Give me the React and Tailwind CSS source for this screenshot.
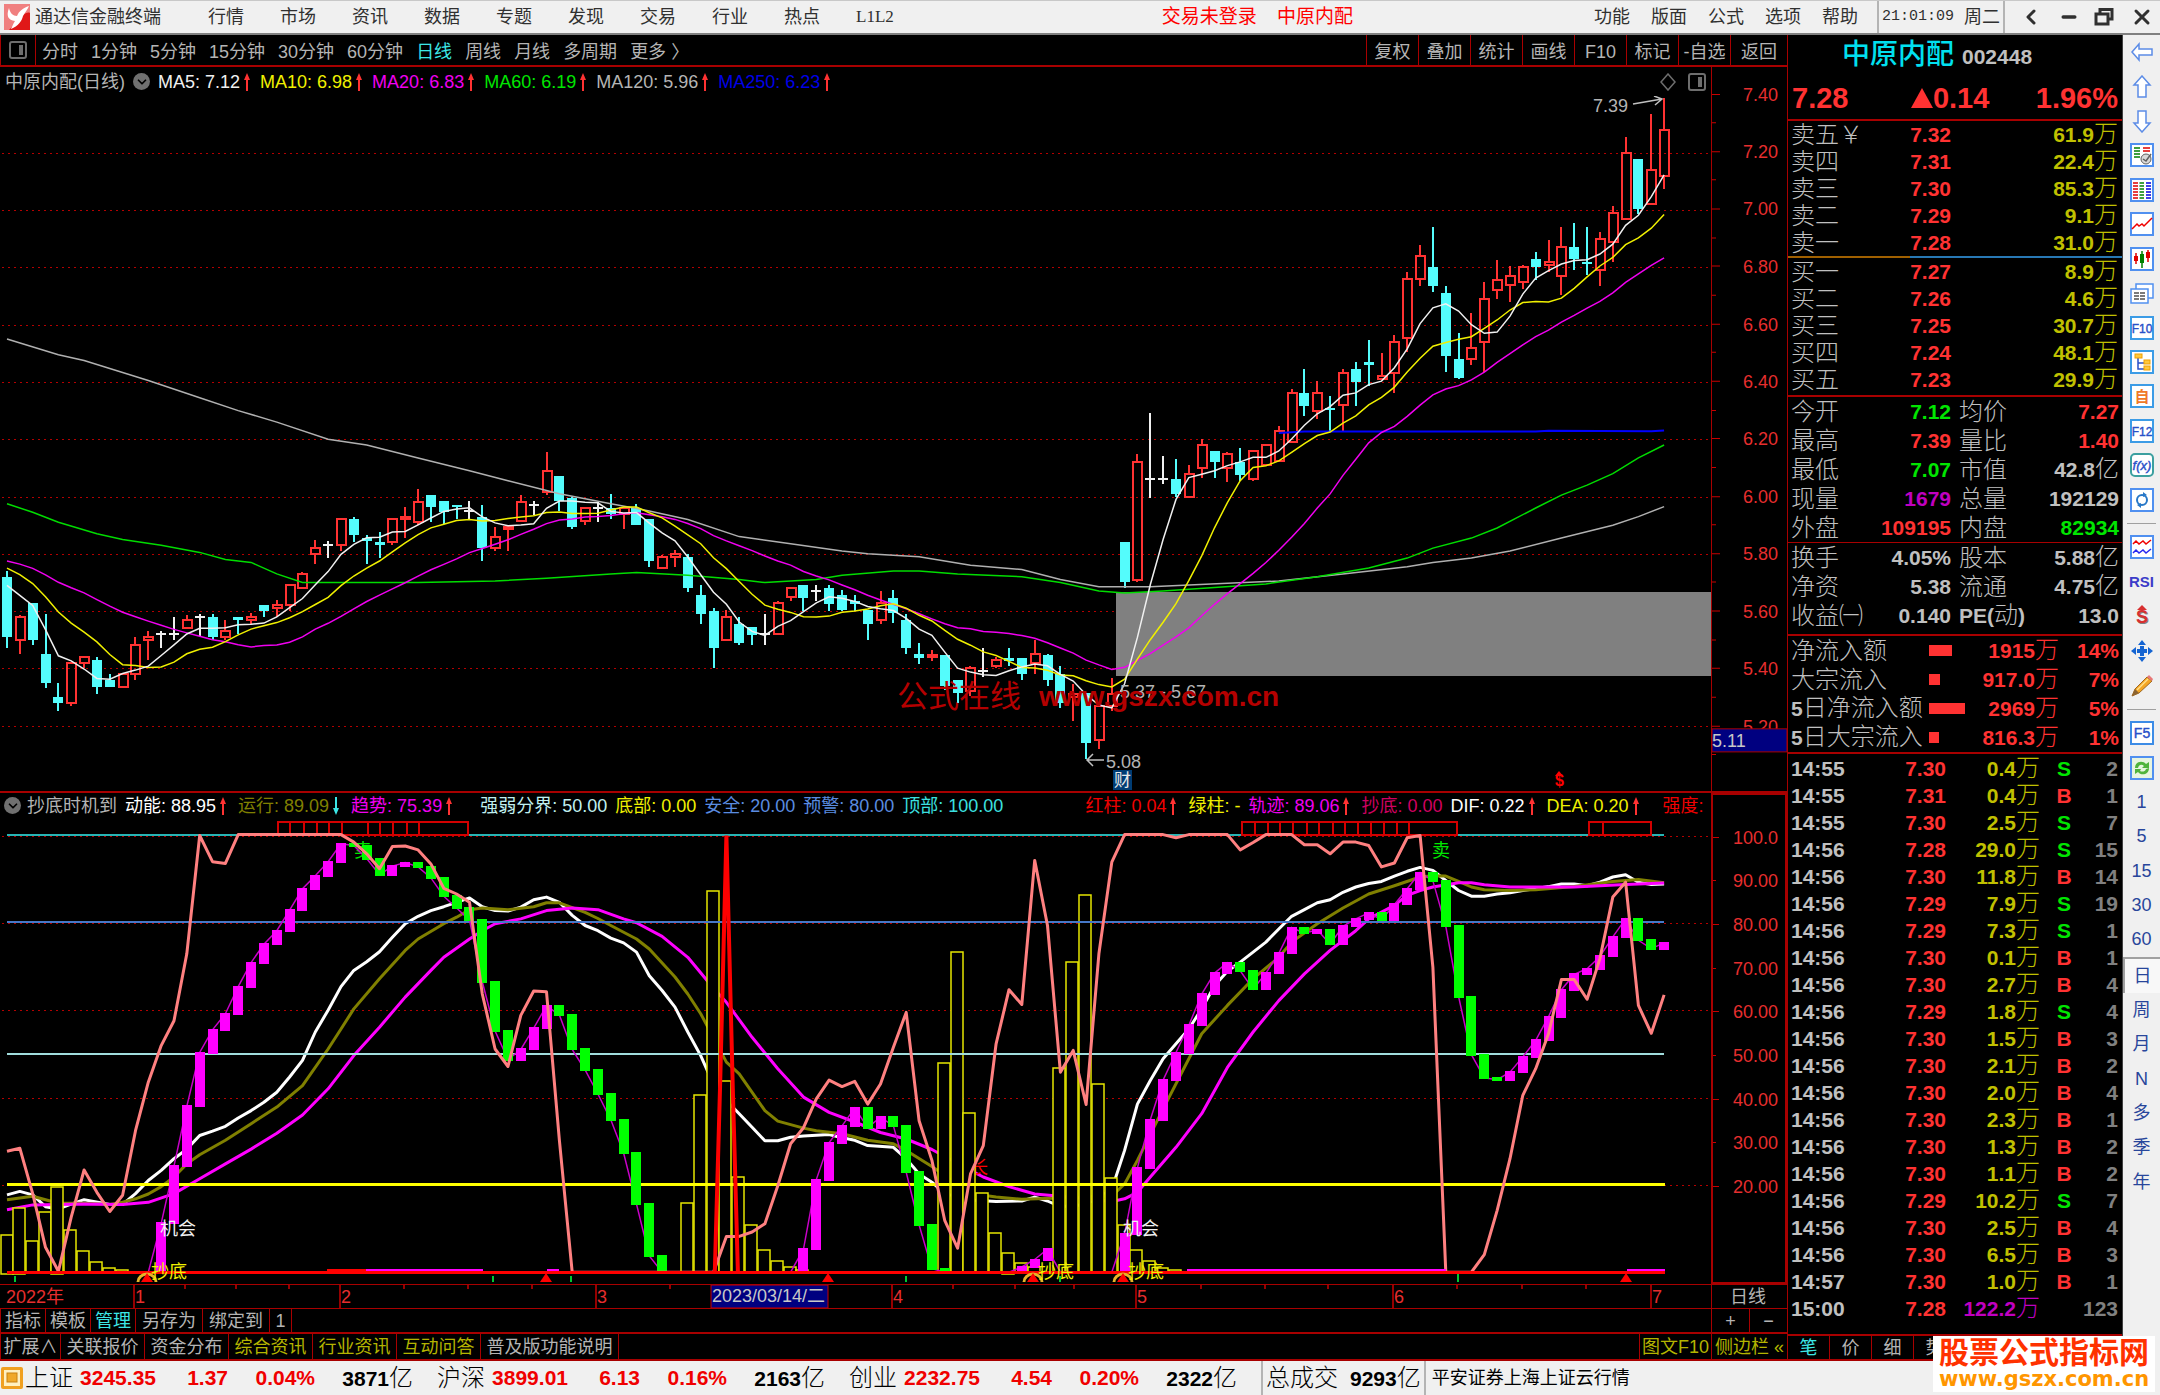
import { ChevronDown, ChevronLeft, Minus, X } from "lucide-react";

const MENU = ["行情", "市场", "资讯", "数据", "专题", "发现", "交易", "行业", "热点"];
const MENU_RIGHT = ["功能", "版面", "公式", "选项", "帮助"];
const PERIODS = ["分时", "1分钟", "5分钟", "15分钟", "30分钟", "60分钟", "日线", "周线", "月线", "多周期", "更多 〉"];
const TOOLS = ["复权", "叠加", "统计", "画线", "F10", "标记", "-自选", "返回"];

const MA_LEGEND = [
  ["MA5: 7.12", "text-[#f0f0f0]"],
  ["MA10: 6.98", "text-[#f0f000]"],
  ["MA20: 6.83", "text-[#f000f0]"],
  ["MA60: 6.19", "text-[#00e600]"],
  ["MA120: 5.96", "text-[#b4b4b4]"],
  ["MA250: 6.23", "text-[#0000e6]"],
];

// text, colour, arrow direction, extra spacing
const SUB_LEGEND = [
  ["动能: 88.95", "text-white", "up", ""],
  ["运行: 89.09", "text-[#808000]", "down", ""],
  ["趋势: 75.39", "text-[#f000f0]", "up", ""],
  ["强弱分界: 50.00", "text-[#c0f0f0]", "", "ml-4"],
  ["底部: 0.00", "text-[#f0f000]", "", ""],
  ["安全: 20.00", "text-[#5a8ce0]", "", ""],
  ["预警: 80.00", "text-[#5a8ce0]", "", ""],
  ["顶部: 100.00", "text-[#3ce0e0]", "", ""],
  ["红柱: 0.04", "text-[#f00000]", "up", "ml-[74px]"],
  ["绿柱: -", "text-[#f0f000]", "", ""],
  ["轨迹: 89.06", "text-[#f000f0]", "up", ""],
  ["抄底: 0.00", "text-[#d00060]", "", ""],
  ["DIF: 0.22", "text-white", "up", ""],
  ["DEA: 0.20", "text-[#f0f000]", "up", ""],
  ["强度:", "text-[#f00000]", "", "ml-3"],
];

// open, close, high, low
const CANDLES = [
  [5.72, 5.51, 5.74, 5.47], [5.5, 5.58, 5.585, 5.45], [5.63, 5.5, 5.63, 5.48], [5.45, 5.35, 5.59, 5.33],
  [5.3, 5.28, 5.35, 5.25], [5.28, 5.42, 5.42, 5.27], [5.42, 5.44, 5.44, 5.4], [5.43, 5.335, 5.44, 5.31],
  [5.36, 5.335, 5.38, 5.335], [5.335, 5.38, 5.38, 5.335], [5.38, 5.48, 5.51, 5.36], [5.5, 5.51, 5.53, 5.43],
  [5.52, 5.52, 5.53, 5.47], [5.52, 5.52, 5.58, 5.5], [5.54, 5.57, 5.585, 5.54], [5.58, 5.58, 5.59, 5.51],
  [5.58, 5.51, 5.59, 5.5], [5.51, 5.53, 5.57, 5.5], [5.58, 5.57, 5.58, 5.52], [5.57, 5.58, 5.595, 5.555],
  [5.62, 5.6, 5.62, 5.58], [5.61, 5.62, 5.64, 5.58], [5.62, 5.69, 5.695, 5.6], [5.68, 5.73, 5.735, 5.68],
  [5.8, 5.82, 5.85, 5.765], [5.83, 5.83, 5.845, 5.785], [5.83, 5.92, 5.92, 5.81], [5.92, 5.865, 5.93, 5.84],
  [5.855, 5.845, 5.865, 5.765], [5.84, 5.83, 5.875, 5.785], [5.84, 5.92, 5.925, 5.83], [5.92, 5.93, 5.965, 5.855],
  [5.91, 5.98, 6.025, 5.9], [6.005, 5.965, 6.005, 5.91], [5.985, 5.945, 5.985, 5.905], [5.972, 5.964, 5.972, 5.92],
  [5.95, 5.95, 5.985, 5.92], [5.93, 5.82, 5.97, 5.775], [5.82, 5.86, 5.895, 5.81], [5.89, 5.895, 5.9, 5.81],
  [5.915, 5.98, 6.005, 5.91], [5.97, 5.97, 5.985, 5.935], [6.015, 6.09, 6.155, 6.005], [6.07, 5.985, 6.07, 5.95],
  [5.995, 5.895, 6, 5.885], [5.915, 5.96, 5.96, 5.9], [5.96, 5.96, 5.98, 5.91], [5.96, 5.94, 6.01, 5.92],
  [5.94, 5.96, 5.96, 5.885], [5.96, 5.9, 5.975, 5.9], [5.92, 5.775, 5.92, 5.755], [5.75, 5.79, 5.795, 5.75],
  [5.79, 5.8, 5.815, 5.755], [5.79, 5.68, 5.8, 5.665], [5.655, 5.59, 5.69, 5.555], [5.6, 5.47, 5.61, 5.4],
  [5.5, 5.58, 5.605, 5.495], [5.555, 5.49, 5.58, 5.48], [5.545, 5.515, 5.545, 5.48], [5.52, 5.52, 5.59, 5.48],
  [5.52, 5.63, 5.635, 5.52], [5.65, 5.68, 5.685, 5.635], [5.69, 5.645, 5.69, 5.6], [5.67, 5.67, 5.69, 5.635],
  [5.68, 5.625, 5.69, 5.6], [5.655, 5.605, 5.675, 5.6], [5.635, 5.625, 5.655, 5.6], [5.605, 5.555, 5.605, 5.5],
  [5.57, 5.63, 5.67, 5.555], [5.645, 5.595, 5.675, 5.56], [5.57, 5.47, 5.59, 5.45], [5.45, 5.435, 5.49, 5.415],
  [5.44, 5.445, 5.465, 5.425], [5.445, 5.34, 5.445, 5.325], [5.36, 5.315, 5.36, 5.28], [5.32, 5.4, 5.41, 5.305],
  [5.39, 5.39, 5.47, 5.37], [5.41, 5.43, 5.44, 5.4], [5.435, 5.425, 5.47, 5.41], [5.435, 5.38, 5.435, 5.36],
  [5.42, 5.45, 5.5, 5.38], [5.445, 5.36, 5.45, 5.34], [5.38, 5.28, 5.41, 5.26], [5.3, 5.31, 5.345, 5.215],
  [5.315, 5.14, 5.315, 5.085], [5.15, 5.27, 5.28, 5.12], [5.27, 5.31, 5.365, 5.25], [5.84, 5.7, 5.84, 5.68],
  [5.71, 6.12, 6.15, 5.7], [6.06, 6.06, 6.29, 5.995], [6.06, 6.06, 6.14, 6.045], [6.06, 6.01, 6.13, 6],
  [6, 6.08, 6.11, 6], [6.1, 6.18, 6.2, 6.065], [6.16, 6.12, 6.16, 6.065], [6.1, 6.15, 6.155, 6.05],
  [6.12, 6.075, 6.17, 6.055], [6.06, 6.16, 6.16, 6.055], [6.11, 6.18, 6.18, 6.11], [6.125, 6.23, 6.245, 6.125],
  [6.19, 6.36, 6.375, 6.19], [6.36, 6.315, 6.445, 6.28], [6.3, 6.36, 6.405, 6.27], [6.31, 6.305, 6.35, 6.23],
  [6.32, 6.43, 6.445, 6.23], [6.445, 6.4, 6.47, 6.315], [6.47, 6.46, 6.545, 6.385], [6.41, 6.42, 6.5, 6.41],
  [6.43, 6.54, 6.565, 6.36], [6.555, 6.76, 6.785, 6.505], [6.76, 6.84, 6.88, 6.735], [6.8, 6.735, 6.94, 6.715],
  [6.71, 6.49, 6.735, 6.435], [6.48, 6.415, 6.57, 6.41], [6.48, 6.52, 6.64, 6.46], [6.54, 6.69, 6.75, 6.435],
  [6.72, 6.755, 6.825, 6.69], [6.74, 6.77, 6.805, 6.68], [6.75, 6.8, 6.81, 6.725], [6.83, 6.8, 6.855, 6.755],
  [6.81, 6.82, 6.895, 6.785], [6.77, 6.87, 6.94, 6.705], [6.87, 6.83, 6.955, 6.79], [6.82, 6.815, 6.94, 6.775],
  [6.79, 6.9, 6.925, 6.735], [6.89, 6.99, 7.015, 6.82], [6.97, 7.2, 7.255, 6.965], [7.18, 7.005, 7.18, 6.985],
  [7.02, 7.14, 7.335, 7.02], [7.12, 7.28, 7.39, 7.075],
];

// closes of the 19 sessions before the first candle
const PRIOR = [...Array(10).fill(5.8), ...Array(5).fill(5.81), 5.755, 5.675, 5.775, 5.735];
const CLOSES = [...PRIOR, ...CANDLES.map((c) => c[1])];

// [session, value] pairs
const MA60 = [[0, 5.975], [2, 5.945], [4, 5.91], [7, 5.87], [9, 5.85], [12, 5.83], [15, 5.805], [17, 5.78], [19, 5.77], [21, 5.73], [23, 5.7], [32, 5.7], [38, 5.705], [42, 5.715], [47, 5.73], [49, 5.735], [53, 5.725], [57, 5.71], [59, 5.7], [63, 5.71], [65, 5.725], [69, 5.74], [71, 5.74], [74, 5.73], [79, 5.72], [82, 5.7], [85, 5.67], [87, 5.663], [90, 5.67], [98, 5.695], [102, 5.72], [106, 5.75], [109, 5.785], [111, 5.82], [114, 5.855], [116, 5.89], [119, 5.96], [121, 6.005], [123, 6.04], [125, 6.08], [127, 6.135], [129, 6.18]];
const MA120 = [[0, 6.55], [4, 6.495], [6, 6.475], [11, 6.405], [15, 6.345], [18, 6.3], [21, 6.26], [25, 6.2], [28, 6.18], [32, 6.135], [36, 6.09], [39, 6.055], [43, 6.01], [47, 5.975], [50, 5.95], [53, 5.92], [57, 5.86], [61, 5.835], [65, 5.81], [67, 5.8], [71, 5.79], [75, 5.76], [79, 5.745], [82, 5.71], [85, 5.685], [89, 5.685], [99, 5.705], [104, 5.73], [109, 5.755], [111, 5.77], [114, 5.785], [117, 5.81], [121, 5.855], [125, 5.9], [127, 5.93], [129, 5.965]];
const MA250 = [[99, 6.222], [101, 6.227], [119, 6.227], [120, 6.23], [128, 6.228], [129, 6.231]];

const TREND = [
  ...Array(12).fill(0), 11.2, 24.3, 38, 50.3, 55.5, 59.2, 65.4, 70.9, 75.1, 78.2, 82.9, 87.8, 90.8, 94, 98.1, 97.7, 94.7, 91, 93, 93.8, 92.8, 90.3,
  86.1, 83.4, 80.6, 66.5, 55.2, 48.7, 51, 55.9, 61, 58.9, 51, 46.3, 40.8, 34.9, 27.3, 15.6, 3.7, 0, 0, 0, 0, 0, 0, 0, 0, 0, 0, 0,
  5.3, 21.2, 29.7, 33.5, 37.6, 33.1, 35.5, 33.5, 22.9, 10.8, 0.8, 0, 0, 0, 0, 0, 0, 1.2, 2.9, 5.3, 0, 0, 0, 0, 0, 8.8,
  23.9, 34.9, 44, 50.3, 56.5, 63.7, 68.5, 70.9, 69, 64.8, 68.5, 73, 78.9, 77.6, 78.4, 75.1, 79.2, 80.9, 82.3, 80.7, 84.2, 87.8, 91.5, 89.6,
  79.2, 63.1, 49.8, 44.5, 44.1, 45.8, 49.3, 53.1, 58.5, 64.7, 68.2, 69.5, 72.3, 76.8, 80.9, 76, 74.1, 75.4,
];
const MOMENTUM = [[0, 17.7], [1, 18.5], [2, 17.7], [3, 15], [4, 14.5], [5, 15.6], [6, 16.6], [8, 15.5], [9, 15.5], [10, 18], [11, 21], [12, 23.3], [13, 26], [14, 28.2], [15, 31.3], [16, 32.3], [17, 33.4], [18, 35.3], [19, 37], [20, 38.9], [21, 41.2], [22, 44.7], [23, 48.5], [24, 55], [25, 60], [26, 65.4], [27, 69.1], [28, 71.1], [29, 73.4], [30, 76.7], [31, 79.8], [32, 81.5], [33, 82.8], [34, 83.7], [35, 84.7], [36, 85.7], [37, 83.7], [38, 82.8], [39, 82.7], [40, 83.6], [41, 85.3], [42, 85.9], [43, 84.7], [44, 81.7], [45, 79.4], [46, 78.2], [47, 76.5], [48, 75.4], [49, 73.3], [50, 67.9], [51, 64.5], [52, 60.7], [53, 55], [54, 49.6], [55, 43], [56, 39.3], [57, 36.3], [58, 33.2], [59, 30.1], [60, 30.1], [61, 30.9], [62, 31.2], [64, 31.5], [65, 30.8], [66, 30.2], [67, 29], [69, 28.6], [70, 26], [71, 22.5], [72, 20.6], [73, 18], [75, 16.5], [77, 16.2], [79, 16.3], [80, 17.2], [81, 16.3], [82, 15], [84, 15.5], [86, 19], [87, 27.9], [88, 38.5], [89, 43.9], [90, 48.9], [91, 52.3], [92, 55.7], [93, 60.3], [94, 65.6], [95, 68.9], [96, 71], [97, 73.3], [98, 75.6], [99, 78.6], [100, 81.5], [101, 83], [102, 84.6], [103, 85.3], [104, 87], [105, 88.2], [106, 89], [107, 89.5], [108, 90.7], [109, 91.8], [110, 92.7], [111, 92], [112, 89.7], [113, 87.4], [114, 86.1], [115, 86.1], [116, 86.6], [117, 86.9], [118, 87.4], [119, 87.8], [120, 88.3], [121, 88.9], [122, 88.9], [123, 88.5], [124, 89.3], [125, 90.5], [126, 91], [127, 89.3], [128, 88.8], [129, 88.9]];
const RUNNING = [[0, 16.6], [2, 17.4], [4, 15.8], [6, 15.8], [8, 15.5], [9, 16], [10, 16.8], [11, 17.9], [12, 19.6], [13, 21.8], [14, 24.8], [15, 26.9], [17, 30.2], [19, 34], [21, 37.8], [23, 42.7], [25, 51.1], [26, 55.7], [27, 60.3], [29, 67.2], [31, 73.7], [32, 76.3], [34, 79.8], [35, 81.3], [36, 83], [37, 83.4], [39, 83], [41, 83.7], [42, 84.6], [43, 84.6], [45, 82.4], [46, 81], [47, 79.4], [49, 76.3], [50, 74], [52, 67.6], [53, 63.7], [54, 59.2], [56, 48.1], [57, 45.4], [59, 37], [60, 34.6], [62, 33], [63, 32.4], [65, 31.7], [67, 30.2], [69, 29.4], [70, 27.9], [72, 24.2], [75, 18], [77, 17.2], [79, 16.7], [82, 17], [86, 17.5], [87, 20.2], [88, 25.6], [90, 37.4], [93, 54.6], [95, 61.1], [97, 67.2], [99, 72.1], [100, 75.6], [102, 79.8], [104, 83.4], [106, 86.6], [108, 88.5], [110, 90.5], [111, 90.8], [112, 90.7], [113, 89.5], [114, 88.2], [115, 87.6], [117, 87.4], [119, 87.6], [122, 88.3], [125, 89.5], [127, 89.9], [129, 89.2]];
const TRACK = [[0, 14.3], [2, 15.4], [6, 15.6], [9, 15.5], [11, 16], [13, 18], [15, 21.4], [17, 24.8], [19, 28.2], [21, 31.8], [23, 36], [25, 42], [27, 49.6], [29, 56.1], [31, 63], [33, 69.1], [34, 72.1], [36, 76.3], [37, 78.2], [38, 79.8], [40, 80.9], [42, 82.8], [44, 83.4], [46, 83], [48, 80.9], [49, 80], [51, 76.9], [53, 72.1], [55, 65], [56, 61.8], [58, 53.8], [60, 46.6], [62, 40.1], [64, 36.6], [66, 34.4], [68, 32], [70, 30.5], [72, 28.1], [75, 23.3], [76, 21.8], [78, 19.6], [80, 17.9], [82, 17.4], [86, 16.2], [87, 16.8], [88, 18.3], [89, 21.8], [91, 28.6], [93, 36.3], [95, 46.9], [97, 55], [99, 62.2], [101, 68.3], [103, 73.7], [105, 78.2], [106, 80.9], [108, 84], [109, 86.3], [110, 87.4], [111, 88.2], [113, 89.2], [114, 89.2], [115, 88.7], [117, 88.2], [122, 88.2], [126, 88.8], [129, 89.1]];
const STRENGTH = [[0, 27.7], [1, 28.4], [2, 18], [3, 5.7], [4, 0.2], [5, 12.6], [6, 23.4], [7, 18.3], [8, 13.9], [9, 17.6], [10, 32.4], [11, 43.5], [12, 51.9], [13, 57.6], [14, 72.9], [15, 100], [16, 94], [17, 93.6], [18, 100.2], [26, 100.2], [27, 98.5], [28, 95.8], [29, 92.4], [30, 97.5], [31, 97.6], [32, 96.7], [33, 93.5], [34, 87.9], [35, 86.6], [36, 84.7], [37, 63.7], [38, 51.1], [39, 47.1], [40, 58.8], [41, 64.4], [42, 64.2], [43, 30.2], [44, 0], [55, 0], [56, 8.2], [57, 8.2], [58, 9.2], [59, 11.1], [60, 19.8], [61, 29.4], [62, 33.1], [63, 39.7], [64, 44], [65, 42.5], [66, 43.7], [67, 38.5], [68, 43.1], [69, 51.5], [70, 59.5], [71, 34.7], [72, 25.6], [73, 11.8], [74, 5.5], [75, 22.5], [76, 29], [77, 52.3], [78, 64.7], [79, 61.3], [80, 94.3], [81, 79.4], [82, 45.8], [83, 50.8], [84, 38.4], [85, 72.9], [86, 93.9], [87, 100.2], [90, 100.2], [91, 99.5], [92, 100.2], [95, 100.2], [96, 96.7], [97, 98.4], [98, 100.2], [100, 100.2], [101, 97.9], [102, 97.9], [103, 95.8], [104, 98.5], [105, 98.5], [106, 97.7], [107, 92.8], [108, 93.7], [109, 99.5], [110, 100], [111, 69.8], [112, 0], [114, 0], [115, 4], [116, 14.1], [117, 26], [118, 40.5], [119, 46.6], [120, 54.6], [121, 67], [122, 67], [123, 62.5], [124, 71.8], [125, 85.9], [126, 89.3], [127, 61.1], [128, 54.7], [129, 63.5]];
const BARS = [[0, 8.6], [1, 14.8], [2, 7.2], [3, 13.7], [4, 19.6], [5, 9.7], [6, 4.9], [7, 2.4], [8, 1], [9, 0.4], [53, 15.9], [54, 40.6], [55, 87.3], [56, 43.7], [57, 21.8], [58, 10.7], [59, 5.1], [60, 2.5], [61, 1.1], [62, 0.5], [73, 47.9], [74, 73.3], [75, 36.5], [76, 18.2], [77, 9], [78, 4.5], [79, 2.1], [80, 1.1], [82, 46.8], [83, 71.1], [84, 86.3], [85, 43.1], [86, 21.5], [87, 10.7], [88, 5.1], [89, 2.5], [90, 1], [91, 0.4]];

const PRICE_LABELS = [7.4, 7.2, 7, 6.8, 6.6, 6.4, 6.2, 6, 5.8, 5.6, 5.4, 5.2];
const SUB_LABELS = [["100.0", 100], ["90.00", 90], ["80.00", 80], ["70.00", 70], ["60.00", 60], ["50.00", 50], ["40.00", 40], ["30.00", 30], ["20.00", 20]];
const MONTHS = [["1", 134], ["2", 340], ["3", 596], ["4", 892], ["5", 1136], ["6", 1393], ["7", 1651]];
const WEEKS = [185, 236, 289, 404, 468, 532, 670, 953, 1015, 1074, 1201, 1265, 1328, 1457, 1522, 1586];
const ZONES = [
  [278, 468, [290, 304, 317, 329, 342, 368, 380, 393, 407, 419]],
  [1242, 1457, [1255, 1268, 1280, 1293, 1307, 1319, 1333, 1345, 1358, 1371, 1384, 1397, 1409]],
  [1589, 1651, [1603]],
];

const SELLS = [["卖五￥", "7.32", "61.9"], ["卖四", "7.31", "22.4"], ["卖三", "7.30", "85.3"], ["卖二", "7.29", "9.1"], ["卖一", "7.28", "31.0"]];
const BUYS = [["买一", "7.27", "8.9"], ["买二", "7.26", "4.6"], ["买三", "7.25", "30.7"], ["买四", "7.24", "48.1"], ["买五", "7.23", "29.9"]];

const R = "text-[#ff3232]";
const G = "text-[#00e600]";
const W = "text-[#c0c0c0]";
const STATS = [
  ["今开", "7.12", G, "均价", "7.27", R],
  ["最高", "7.39", R, "量比", "1.40", R],
  ["最低", "7.07", G, "市值", "42.8亿", W],
  ["现量", "1679", "text-[#c000c0]", "总量", "192129", W],
  ["外盘", "109195", R, "内盘", "82934", G],
];
const FUNDAMENTALS = [
  ["换手", "4.05%", W, "股本", "5.88亿", W],
  ["净资", "5.38", W, "流通", "4.75亿", W],
  ["收益㈠", "0.140", W, "PE(动)", "13.0", W],
];
const FLOWS = [["净流入额", "1915", "14%"], ["大宗流入", "917.0", "7%"], ["5日净流入额", "2969", "5%"], ["5日大宗流入", "816.3", "1%"]];
const TICKS = [
  ["14:55", "7.30", "0.4", "S", 2], ["14:55", "7.31", "0.4", "B", 1], ["14:55", "7.30", "2.5", "S", 7],
  ["14:56", "7.28", "29.0", "S", 15], ["14:56", "7.30", "11.8", "B", 14], ["14:56", "7.29", "7.9", "S", 19],
  ["14:56", "7.29", "7.3", "S", 1], ["14:56", "7.30", "0.1", "B", 1], ["14:56", "7.30", "2.7", "B", 4],
  ["14:56", "7.29", "1.8", "S", 4], ["14:56", "7.30", "1.5", "B", 3], ["14:56", "7.30", "2.1", "B", 2],
  ["14:56", "7.30", "2.0", "B", 4], ["14:56", "7.30", "2.3", "B", 1], ["14:56", "7.30", "1.3", "B", 2],
  ["14:56", "7.30", "1.1", "B", 2], ["14:56", "7.29", "10.2", "S", 7], ["14:56", "7.30", "2.5", "B", 4],
  ["14:56", "7.30", "6.5", "B", 3], ["14:57", "7.30", "1.0", "B", 1], ["15:00", "7.28", "122.2", "", 123],
];
const INDEXES = [
  ["上证", "3245.35", "1.37", "0.04%", "3871"],
  ["沪深", "3899.01", "6.13", "0.16%", "2163"],
  ["创业", "2232.75", "4.54", "0.20%", "2322"],
];

const sx = (i) => 7 + i * 12.846;
const py = (p) => 324.7 + (6.6 - p) * 286.4;
const vy = (v) => 1272.2 - v * 4.367;
const line = (pts, fy) => pts.map(([i, v]) => `${sx(i).toFixed(1)},${fy(v).toFixed(1)}`).join(" ");
const average = (n) =>
  CANDLES.map((_, i) => {
    const end = i + PRIOR.length + 1;
    return [i, CLOSES.slice(end - n, end).reduce((a, b) => a + b, 0) / n];
  });

function Arrow({ down }) {
  return (
    <svg viewBox="0 0 14 20" className={`h-5 w-[14px] shrink-0 ${down ? "rotate-180 text-[#3ce6e6]" : "text-[#ff3232]"}`}>
      <path d="M7 1 L10 8 H8 V19 H6 V8 H4 Z" fill="currentColor" />
    </svg>
  );
}

function Fold({ label }) {
  return (
    <button aria-label={label} className="flex h-[17px] w-[17px] shrink-0 items-center justify-center rounded-full bg-[#707070] text-black">
      <ChevronDown className="h-3.5 w-3.5" strokeWidth={3} />
    </button>
  );
}

function PanelIcon() {
  return (
    <svg viewBox="0 0 20 18" className="h-[18px] w-5">
      <rect x="2" y="1" width="16" height="16" rx="2" fill="none" stroke="#6e6e6e" strokeWidth="2" />
      <rect x="11" y="4" width="4" height="10" fill="#6e6e6e" />
    </svg>
  );
}

function TitleBar() {
  return (
    <header className="flex h-[35px] items-center border-t border-b-2 border-t-[#c8c8c8] border-b-[#808080] bg-[#f0f0f0] text-lg leading-6 text-[#303030]">
      <svg viewBox="0 0 26 26" className="ml-1 h-[26px] w-[26px] shrink-0">
        <rect width="26" height="26" fill="#e01818" />
        <path d="M0 0 H26 V9 C20 6 12 20 5 26 H0 Z" fill="#f08080" />
        <path d="M5 4 C2 12 4 16 11 17 C9 20 8 23 7 25 C14 22 18 17 19 12 C21 8 24 5 25 2 C19 4 15 7 13 12 C9 12 6 9 5 4 Z" fill="#fff" />
      </svg>
      <h1 className="ml-[5px]">通达信金融终端</h1>
      <nav className="ml-[47px] flex items-center gap-9">
        {MENU.map((m) => (
          <button key={m}>{m}</button>
        ))}
        <button className="font-['Liberation_Serif',serif] text-[17px]">L1L2</button>
      </nav>
      <div className="flex flex-1 justify-center gap-5 pl-[54px] text-[19px] text-[#ff0000]">
        <button>交易未登录</button>
        <button>中原内配</button>
      </div>
      <nav className="ml-[27px] flex gap-[21px]">
        {MENU_RIGHT.map((m) => (
          <button key={m}>{m}</button>
        ))}
      </nav>
      <div className="ml-[19px] flex h-full items-center gap-2.5 border-x-2 border-[#b4b4b4] px-[3px]">
        <time className="font-['Liberation_Mono',monospace] text-[15px]">21:01:09</time>
        <span>周二</span>
      </div>
      <div className="flex w-[155px] items-center justify-between pr-1.5 pl-3.5 text-[#303030]">
        <button aria-label="后退"><ChevronLeft className="h-6 w-6" strokeWidth={3} /></button>
        <button aria-label="最小化"><Minus className="h-5 w-5" strokeWidth={4} /></button>
        <button aria-label="还原">
          <svg viewBox="0 0 20 20" className="h-5 w-5" fill="none" stroke="currentColor" strokeWidth="3">
            <path d="M6 6 V2.500 H18 V12 H14" />
            <rect x="2" y="7" width="12" height="10" />
          </svg>
        </button>
        <button aria-label="关闭"><X className="h-6 w-6" strokeWidth={3} /></button>
      </div>
    </header>
  );
}

function Toolbar() {
  return (
    <div className="flex h-8 items-stretch border-b-2 border-[#a80000] text-lg leading-6 text-[#b4b4b4]">
      <button aria-label="侧栏" className="flex w-[36px] items-center justify-center border-x border-[#a80000]">
        <PanelIcon />
      </button>
      <div className="flex flex-1 items-center gap-[13px] pt-1 pl-1.5">
        {PERIODS.map((p) => (
          <button key={p} className={p === "日线" ? "text-[#3ce6e6]" : ""}>{p}</button>
        ))}
      </div>
      {TOOLS.map((t) => (
        <button key={t} className="w-[52px] border-l border-[#a80000] pt-1 text-center whitespace-nowrap last:w-[57px]">{t}</button>
      ))}
    </div>
  );
}

function Candle({ i, d: [open, close, high, low] }) {
  const x = Math.round(sx(i));
  const top = Math.round(py(Math.max(open, close)));
  const h = Math.max(Math.round(py(Math.min(open, close))) - top, 2);
  const yHigh = Math.round(py(high));
  const yLow = Math.round(py(low));
  if (open === close) {
    return (
      <g fill="#f0f0f0">
        <rect x={x - 1} y={yHigh} width="2" height={yLow - yHigh} />
        <rect x={x - 5} y={top - 1} width="10" height="2" />
      </g>
    );
  }
  if (close < open) {
    return (
      <g fill="#54fcfc">
        <rect x={x - 1} y={yHigh} width="2" height={yLow - yHigh} />
        <rect x={x - 5} y={top} width="10" height={h} />
      </g>
    );
  }
  return (
    <g fill="#ff3232">
      <rect x={x - 1} y={yHigh} width="2" height={Math.max(top - yHigh, 0)} />
      <rect x={x - 1} y={top + h} width="2" height={Math.max(yLow - top - h, 0)} />
      <rect x={x - 4} y={top} width="9" height={h} fill="none" stroke="#ff3232" strokeWidth="1.500" />
    </g>
  );
}

function PriceChart() {
  return (
    <svg viewBox="0 96 1711 695" preserveAspectRatio="none" className="block h-[695px] w-full" role="img" aria-label="日K线">
      <g shapeRendering="crispEdges">
        {PRICE_LABELS.slice(1).map((p) => (
          <line key={p} x1="2" x2="1711" y1={Math.round(py(p)) + 0.5} y2={Math.round(py(p)) + 0.5} stroke="#b40000" strokeDasharray="2 4" />
        ))}
        <rect x="1116" y="592" width="595" height="84" fill="#808080" />
        {CANDLES.map((d, i) => (
          <Candle key={i} i={i} d={d} />
        ))}
      </g>
      <g fill="none" strokeWidth="1.500">
        <polyline points={line(MA120, py)} stroke="#b0b0b0" />
        <polyline points={line(MA250, py)} stroke="#0000ff" strokeWidth="2" />
        <polyline points={line(MA60, py)} stroke="#00dc00" />
        <polyline points={line(average(20), py)} stroke="#f000f0" />
        <polyline points={line(average(10), py)} stroke="#f0f000" />
        <polyline points={line(average(5), py)} stroke="#f0f0f0" />
      </g>
      <g fill="#b4b4b4" fontSize="18">
        <text x="1593" y="112">7.39</text>
        <text x="1106" y="768">5.08</text>
        <text x="1120" y="698">5.37 - 5.67</text>
      </g>
      <g fill="none" stroke="#c0c0c0" strokeWidth="1.500">
        <path d="M1633 104 L1662 99 M1654 96 L1662 99 L1655 105" />
        <path d="M1104 760 H1087 M1093 754 L1087 760 L1093 766" />
      </g>
      <rect x="1113" y="770" width="19" height="20" fill="#003c74" />
      <text x="1114" y="786" fontSize="17" fill="#e8e8e8">财</text>
      <text x="1555" y="786" fontSize="16" fontWeight="700" fill="#ff0000">$</text>
      <path d="M1555 776 L1559 771 L1563 776 Z" fill="#ff0000" />
      <text x="897" y="707" fontSize="31" fill="#b40000">公式在线</text>
      <text x="1039" y="706" fontSize="28" fontWeight="700" fill="#b40000">www.gszx.com.cn</text>
    </svg>
  );
}

function PriceAxis() {
  return (
    <svg viewBox="1712 69 75 722" preserveAspectRatio="none" className="block h-full w-full" role="img" aria-label="价格坐标">
      {PRICE_LABELS.map((p) => (
        <g key={p}>
          <path d={`M1712 ${Math.round(py(p)) + 0.5} h8 M1712 ${Math.round(py(p - 0.1)) + 0.5} h4`} stroke="#c80000" />
          <text x="1743" y={Math.round(py(p)) + 7} fontSize="18" fill="#e62e2e">{p.toFixed(2)}</text>
        </g>
      ))}
      <rect x="1712" y="729" width="75" height="23" fill="#000080" stroke="#a80000" />
      <text x="1712" y="747" fontSize="18" fill="#c8c8c8">5.11</text>
    </svg>
  );
}

function IndicatorChart() {
  return (
    <svg viewBox="0 818 1711 464" preserveAspectRatio="none" className="block h-[464px] w-full" role="img" aria-label="抄底时机到">
      <g shapeRendering="crispEdges">
        {[100, 80, 60, 40, 20].map((v) => (
          <line key={v} x1="2" x2="1711" y1={Math.round(vy(v)) + 0.5} y2={Math.round(vy(v)) + 0.5} stroke="#b40000" strokeDasharray="2 4" />
        ))}
      </g>
      <g fill="none" strokeWidth="3" strokeLinejoin="round">
        <polyline points={line(MOMENTUM, vy)} stroke="#ffffff" />
        <polyline points={line(RUNNING, vy)} stroke="#808000" />
        <polyline points={line(TRACK, vy)} stroke="#ff00ff" />
      </g>
      <text x="970" y="1174" fontSize="18" fill="#ff0000">长</text>
      <g fill="#000" stroke="#e6e600" strokeWidth="1.500">
        {BARS.map(([i, v]) => (
          <rect key={i} x={Math.max(Math.round(sx(i)) - 7, 1)} y={Math.round(vy(v))} width="12" height={Math.round(v * 4.367) + 1} />
        ))}
      </g>
      <g shapeRendering="crispEdges">
        <rect x="7" y="834" width="1657" height="2" fill="#28b4b4" />
        <rect x="7" y="921" width="1657" height="2" fill="#4678c8" />
        <rect x="7" y="1053" width="1657" height="2" fill="#a0dcdc" />
        <rect x="7" y="1183" width="1658" height="3" fill="#ffff00" />
      </g>
      <g fill="none" stroke="#d20000" strokeWidth="2">
        {ZONES.map(([x1, x2, marks]) => (
          <path key={x1} d={`M${x1} 822 H${x2} V835 H${x1} Z ${marks.map((m) => `M${m} 822 V835`).join(" ")}`} />
        ))}
      </g>
      <text x="354" y="857" fontSize="18" fill="#00e600">卖</text>
      <text x="1432" y="857" fontSize="18" fill="#00e600">卖</text>
      <polyline points={line(TREND.map((v, i) => [i, v]), vy)} fill="none" stroke="#c800c8" strokeWidth="1.500" />
      <g shapeRendering="crispEdges">
        {TREND.map((v, i) => {
          const prev = TREND[i - 1] ?? 0;
          if (v === prev || (i > 81 && i < 87)) return null;
          const top = Math.round(vy(Math.max(v, prev)));
          const bottom = Math.round(vy(Math.min(v, prev)));
          return <rect key={i} x={Math.round(sx(i)) - 5} y={top - 1} width="10" height={Math.max(bottom - top + 2, 4)} fill={v > prev ? "#ff00ff" : "#00ff00"} />;
        })}
      </g>
      <polyline points={line(STRENGTH, vy)} fill="none" stroke="#ff8080" strokeWidth="3" strokeLinejoin="round" />
      <polyline points={line([[55.1, 0], [55.5, 42], [56, 100], [56.5, 42], [56.9, 0]], vy)} fill="none" stroke="#ff0000" strokeWidth="4" />
      <g shapeRendering="crispEdges">
        <rect x="7" y="1271" width="1658" height="3" fill="#ff0000" />
        <rect x="327" y="1269" width="40" height="2" fill="#ff0000" />
        <path d="M366 1270 H483 M547 1270 H559 M1187 1270 H1446 M1627 1270 H1665" stroke="#ff00ff" strokeWidth="2" />
        <path d="M15 1276 V1282 M493 1276 V1282 M571 1276 V1282 M906 1276 V1282 M1060 1276 V1282 M1458 1274 V1282" stroke="#00c832" strokeWidth="2" />
      </g>
      {[147, 1033, 1123].map((x) => (
        <path key={x} d={`M${x - 9} 1282 A9 8 0 0 1 ${x + 9} 1282`} fill="none" stroke="#e6b428" strokeWidth="3" />
      ))}
      {[147, 546, 828, 1033, 1123, 1626].map((x) => (
        <path key={x} d={`M${x} 1273 L${x + 6} 1282 H${x - 6} Z`} fill="#ff0000" />
      ))}
      <g fontSize="18" fill="#f0f0f0">
        <text x="160" y="1235">机会</text>
        <text x="1123" y="1235">机会</text>
      </g>
      <g fontSize="18" fill="#f0f000">
        <text x="151" y="1278">抄底</text>
        <text x="1038" y="1278">抄底</text>
        <text x="1128" y="1278">抄底</text>
      </g>
    </svg>
  );
}

function IndicatorAxis() {
  return (
    <svg viewBox="1713 794 72 487" preserveAspectRatio="none" className="block h-full w-full" role="img" aria-label="指标坐标">
      {SUB_LABELS.map(([label, v]) => (
        <g key={v}>
          <path d={`M1713 ${Math.round(vy(v)) + 0.5} h${v % 20 === 0 ? 6 : 3}`} stroke="#c80000" />
          <text x="1778" y={Math.round(vy(v)) + 7} fontSize="18" textAnchor="end" fill="#e62e2e">{label}</text>
        </g>
      ))}
    </svg>
  );
}

function TimeAxis() {
  return (
    <svg viewBox="0 1283 1711 23" preserveAspectRatio="none" className="block h-full min-w-0 flex-1" role="img" aria-label="时间坐标">
      <path d={MONTHS.map(([, x]) => `M${x} 1283 V1306`).join(" ") + WEEKS.map((x) => ` M${x} 1283 v4`).join("")} stroke="#c80000" strokeWidth="1.500" />
      <g fontSize="18" fill="#e62e2e">
        <text x="6" y="1301">2022年</text>
        {MONTHS.map(([m, x]) => (
          <text key={m} x={x + 1} y="1301">{m}</text>
        ))}
      </g>
      <rect x="711" y="1283" width="117" height="23" fill="#000080" stroke="#c80000" />
      <text x="712" y="1300" fontSize="18" fill="#c8c8c8">2023/03/14/二</text>
    </svg>
  );
}

function Charts() {
  return (
    <section className="flex min-w-0 flex-1 flex-col bg-black">
      <Toolbar />
      <div className="flex h-6 flex-1">
        <div className="min-w-0 flex-1">
          <div className="flex h-[29px] items-center pl-[5px] text-lg leading-7 whitespace-nowrap">
            <span className="text-[#b4b4b4]">中原内配(日线)</span>
            <span className="mx-2 flex"><Fold label="展开" /></span>
            {MA_LEGEND.map(([t, c]) => (
              <span key={t} className={`mr-1.5 flex items-center ${c}`}>{t}<Arrow /></span>
            ))}
            <span className="ml-auto flex items-center gap-2.5 pr-1">
              <svg viewBox="0 0 18 18" className="h-[18px] w-[18px]"><path d="M9 1 L16 9 L9 17 L2 9 Z" fill="none" stroke="#6e6e6e" strokeWidth="1.500" /></svg>
              <PanelIcon />
            </span>
          </div>
          <PriceChart />
        </div>
        <div className="w-[76px] border-l border-[#a80000]"><PriceAxis /></div>
      </div>
      <div className="flex border-t-2 border-[#a80000]">
        <div className="min-w-0 flex-1">
          <div className="flex h-[25px] items-center gap-2 overflow-hidden pl-1 text-lg leading-6 whitespace-nowrap">
            <Fold label="展开" />
            <span className="-ml-0.5 text-[#b4b4b4]">抄底时机到</span>
            {SUB_LEGEND.map(([t, c, dir, space]) => (
              <span key={t} className={`flex items-center ${c} ${space}`}>
                {t}
                {dir && <Arrow down={dir === "down"} />}
              </span>
            ))}
          </div>
          <IndicatorChart />
        </div>
        <div className="w-[76px] border-2 border-[#a80000]"><IndicatorAxis /></div>
      </div>
      <div className="flex h-[25px] border-y border-[#a80000] text-lg leading-6 text-[#b4b4b4]">
        <TimeAxis />
        <div className="w-[76px] border-l border-[#a80000] pl-[18px]">日线</div>
      </div>
      <div className="flex h-[25px] border-b-2 border-l border-[#a80000] text-lg leading-6 text-[#b4b4b4]">
        {["指标", "模板", "管理"].map((t) => (
          <button key={t} className={`w-[45px] border-r border-[#a80000] ${t === "管理" ? "text-[#3ce6e6]" : ""}`}>{t}</button>
        ))}
        <button className="w-[67px] border-r border-[#a80000]">另存为</button>
        <button className="w-[67px] border-r border-[#a80000]">绑定到</button>
        <button className="w-[22px] border-r border-[#a80000]">1</button>
        <button className="ml-auto w-[38px] border-l border-[#a80000]">+</button>
        <button className="w-[38px] border-l border-[#a80000]">−</button>
      </div>
      <div className="flex h-[27px] border-b-2 border-l border-[#a80000] text-lg leading-6 text-[#b4b4b4]">
        <button className="w-[60px] border-r border-[#a80000]">扩展∧</button>
        {["关联报价", "资金分布", "综合资讯", "行业资讯", "互动问答"].map((t, i) => (
          <button key={t} className={`w-21 border-r border-[#a80000] ${i > 1 ? "text-[#b4b400]" : ""}`}>{t}</button>
        ))}
        <button className="w-[138px] border-r border-[#a80000]">普及版功能说明</button>
        <button className="ml-auto w-[72px] border-l border-[#a80000] text-[#b4b400]">图文F10</button>
        <button className="w-[76px] border-l border-[#a80000] whitespace-nowrap text-[#b4b400]">侧边栏 «</button>
      </div>
    </section>
  );
}

function Amount({ value }) {
  const unit = /[万亿]$/.test(value) ? value.slice(-1) : "";
  return (
    <>
      {unit ? value.slice(0, -1) : value}
      {unit && <span className="text-2xl leading-6 font-light">{unit}</span>}
    </>
  );
}

function Depth({ rows }) {
  return (
    <table className="w-full table-fixed border-collapse">
      <tbody>
        {rows.map(([label, price, vol]) => (
          <tr key={label} className="h-[27px]">
            <th scope="row" className="w-[80px] p-0 pl-[3px] text-left text-2xl leading-6 font-light">{label}</th>
            <td className="w-[83px] p-0 text-right text-[#ff3232]">{price}</td>
            <td className="p-0 pr-1 text-right text-[#c0c000]"><Amount value={`${vol}万`} /></td>
          </tr>
        ))}
      </tbody>
    </table>
  );
}

function Stats({ rows }) {
  return (
    <table className="w-full table-fixed border-collapse whitespace-nowrap">
      <tbody>
        {rows.map(([l1, v1, c1, l2, v2, c2]) => (
          <tr key={l1} className="h-[29px]">
            <th scope="row" className="w-[80px] p-0 pl-[3px] text-left text-2xl leading-6 font-light">{l1}</th>
            <td className={`w-[83px] p-0 text-right ${c1}`}>{v1}</td>
            <th scope="row" className="w-[76px] p-0 pl-2 text-left text-2xl leading-6 font-light">
              {l2.startsWith("PE") ? <><span className="text-[21px] font-bold">PE(</span>动<span className="text-[21px] font-bold">)</span></> : l2}
            </th>
            <td className={`p-0 pr-[3px] text-right ${c2}`}><Amount value={v2} /></td>
          </tr>
        ))}
      </tbody>
    </table>
  );
}

function Quote() {
  return (
    <aside className="flex w-[336px] shrink-0 flex-col border-x border-r-[#404040] border-l-[#a80000] bg-black text-[21px] leading-6 font-bold text-[#c0c0c0]">
      <div className="border-b-2 border-[#a80000]">
        <div className="flex h-[42px] items-baseline gap-2 pl-[54px]">
          <h2 className="text-[28px] leading-10 font-medium text-[#00e0f0]">中原内配</h2>
          <span>002448</span>
        </div>
        <div className="flex h-[42px] items-center justify-between px-1 text-[29px] text-[#ff3232]">
          <span>7.28</span>
          <span className="ml-4 flex items-center">
            <svg viewBox="0 0 22 20" className="h-5 w-[22px]"><path d="M11 0 L22 20 H0 Z" fill="currentColor" /></svg>
            0.14
          </span>
          <span>1.96%</span>
        </div>
      </div>
      <Depth rows={SELLS} />
      <div className="flex h-0.5"><div className="w-[122px] bg-[#a06000]" /><div className="flex-1 bg-[#2878b4]" /></div>
      <div className="border-b-2 border-[#a80000] pb-[2px]"><Depth rows={BUYS} /></div>
      <div className="border-b border-[#a80000]"><Stats rows={STATS} /></div>
      <div className="border-b-2 border-[#a80000] pb-1"><Stats rows={FUNDAMENTALS} /></div>
      <table className="table-fixed border-collapse whitespace-nowrap">
        <tbody>
          {FLOWS.map(([label, amount, pct]) => (
            <tr key={label} className="h-[29px]">
              <th scope="row" className="w-[141px] p-0 pl-[3px] text-left text-2xl leading-6 font-light">
                {label[0] === "5" ? <><span className="text-[21px] font-bold">5</span>{label.slice(1)}</> : label}
              </th>
              <td className="w-[40px] p-0"><div className="h-[11px] bg-[#ff3232]" style={{ width: Math.round(amount / 83) }} /></td>
              <td className="p-0 text-right text-[#ff3232]"><Amount value={`${amount}万`} /></td>
              <td className="w-[63px] p-0 pr-[3px] text-right text-[#ff3232]">{pct}</td>
            </tr>
          ))}
        </tbody>
      </table>
      <div className="flex-1 border-t-2 border-[#a80000] pt-px">
        <table className="w-full table-fixed border-collapse">
          <tbody>
            {TICKS.map(([time, price, vol, side, n], i) => (
              <tr key={i} className="h-[27px]">
                <td className="w-[70px] p-0 pl-[3px]">{time}</td>
                <td className="w-[88px] p-0 text-right text-[#ff3232]">{price}</td>
                <td className={`w-[94px] p-0 text-right ${side ? "text-[#c0c000]" : "text-[#c000c0]"}`}><Amount value={`${vol}万`} /></td>
                <td className={`w-[48px] p-0 text-center ${side === "S" ? "text-[#00e600]" : "text-[#ff3232]"}`}>{side}</td>
                <td className="p-0 pr-1 text-right text-[#808080]">
                  <span className="flex justify-end">{n}</span>
                </td>
              </tr>
            ))}
          </tbody>
        </table>
      </div>
      <div className="flex h-[27px] border-y-2 border-[#a80000] text-lg leading-6 font-normal text-[#b4b4b4]">
        {["笔", "价", "细", "势"].map((t, i) => (
          <button key={t} className={`w-[42px] border-r border-[#a80000] ${i === 0 ? "text-[#3ce6e6]" : ""}`}>{t}</button>
        ))}
      </div>
    </aside>
  );
}

function Icon({ children, frame = "#5090f0", rx = 0 }) {
  return (
    <svg viewBox="0 0 24 24" className="h-6 w-6">
      {frame && <rect x="1" y="1" width="22" height="22" rx={rx} fill="#fff" stroke={frame} strokeWidth="2" />}
      {children}
    </svg>
  );
}

const small = { fill: "#2850c8", stroke: "#2850c8", strokeWidth: 0.4, textAnchor: "middle" };

const NAV_ICONS = [
  ["后退", <Icon frame=""><path d="M2 12 L9 4 V9 H22 V15 H9 V20 Z" fill="#fff" stroke="#5c8ce6" strokeWidth="1.500" /></Icon>],
  ["上翻", <Icon frame=""><path d="M12 1 L20 10 H16 V22 H8 V10 H4 Z" fill="#fff" stroke="#5c8ce6" strokeWidth="1.500" /></Icon>],
  ["下翻", <Icon frame=""><path d="M12 23 L20 14 H16 V2 H8 V14 H4 Z" fill="#fff" stroke="#5c8ce6" strokeWidth="1.500" /></Icon>],
  ["自选报价", <Icon><path d="M4 5 H10 M4 8 H10 M4 11 H10 M4 14 H10" stroke="#008000" strokeWidth="1.500" /><path d="M13 5 H20 M13 8 H20" stroke="#e00000" strokeWidth="1.500" /><circle cx="16" cy="16" r="5" fill="#d8d8d8" stroke="#606060" /><path d="M13 16 L16 18 L21 11" fill="none" stroke="#606060" strokeWidth="1.500" /></Icon>],
  ["行情列表", <Icon><path d="M3 5 H8 M3 8 H8 M3 11 H8 M3 14 H8 M3 17 H8 M3 20 H8" stroke="#e00000" strokeWidth="1.500" /><path d="M9.500 5 H14 M9.500 8 H14 M9.500 11 H14 M9.500 14 H14 M9.500 17 H14 M9.500 20 H14" stroke="#008000" strokeWidth="1.500" /><path d="M16 5 H21 M16 8 H21 M16 11 H21 M16 14 H21 M16 17 H21 M16 20 H21" stroke="#0000e0" strokeWidth="1.500" /></Icon>],
  ["分时图", <Icon><path d="M2 17 L7 12 L9 14 L12 12 L14 14 L22 6" fill="none" stroke="#f00000" strokeWidth="1.500" /></Icon>],
  ["K线图", <Icon><path d="M6 6 V17 M18 3 V15" stroke="#e00000" strokeWidth="1.500" /><path d="M12 4 V21" stroke="#008000" strokeWidth="1.500" /><rect x="4" y="9" width="4" height="5" fill="#e00000" /><rect x="10" y="7" width="4" height="9" fill="#008000" /><rect x="16" y="5" width="4" height="6" fill="#e00000" /></Icon>],
  ["多窗口", <Icon frame=""><rect x="6" y="3" width="17" height="14" fill="#fff" stroke="#5090f0" strokeWidth="1.500" /><rect x="1" y="8" width="17" height="14" fill="#fff" stroke="#5090f0" strokeWidth="1.500" /><path d="M4 12 H9 M10 12 H15 M4 15 H9 M10 15 H15 M4 18 H9 M10 18 H15" stroke="#505050" strokeWidth="1.500" /></Icon>],
  ["基本资料", <Icon frame="#3c9ce6"><text x="12" y="17" fontSize="12" {...small}>F10</text></Icon>],
  ["板块", <Icon frame="#3c9ce6"><path d="M8 8 V19 H14 M8 13 H14" fill="none" stroke="#2850c8" strokeWidth="1.500" /><rect x="5" y="4" width="7" height="4" fill="#ffc83c" stroke="#f0a000" /><rect x="14" y="10" width="6" height="4" fill="#ffc83c" stroke="#f0a000" /><rect x="14" y="16" width="6" height="4" fill="#ffc83c" stroke="#f0a000" /></Icon>],
  ["自选股", <Icon frame="#3c9ce6"><text x="12" y="18" fontSize="15" fontWeight="700" textAnchor="middle" fill="#f07828">自</text></Icon>],
  ["交易委托", <Icon frame="#3c9ce6"><text x="12" y="17" fontSize="12" {...small}>F12</text></Icon>],
  ["公式管理", <Icon frame="#3ca0a0" rx={4}><text x="12" y="17" fontSize="13" fontStyle="italic" {...small}>f(x)</text></Icon>],
  ["周期切换", <Icon frame="#5090f0"><circle cx="12" cy="12" r="5" fill="none" stroke="#2878c8" strokeWidth="2" /><path d="M13 4 L17 7 L13 9 Z M11 20 L7 17 L11 15 Z" fill="#2878c8" /></Icon>],
];
const DRAW_ICONS = [
  ["叠加指标", <Icon><path d="M3 9 L6 6 L9 9 L13 6 L16 9 L21 5" fill="none" stroke="#f00000" strokeWidth="1.500" /><path d="M3 18 L6 15 L9 18 L13 15 L16 18 L21 14" fill="none" stroke="#2828f0" strokeWidth="1.500" /></Icon>],
  ["RSI", <span className="text-[15px] font-bold text-[#3c3cc8]">RSI</span>],
  ["除权", <Icon frame=""><text x="13" y="20" fontSize="18" fontWeight="700" textAnchor="middle" fill="#808080">S</text><text x="12" y="19" fontSize="18" fontWeight="700" textAnchor="middle" fill="#d83030">S</text><path d="M7 6 L12 1 L17 6 Z" fill="#d83030" /></Icon>],
  ["移动", <Icon frame=""><path d="M12 1 L16 6 H8 Z M12 23 L16 18 H8 Z M1 12 L6 8 V16 Z M23 12 L18 8 V16 Z M10 7 H14 V10 H17 V14 H14 V17 H10 V14 H7 V10 H10 Z" fill="#1464d2" /></Icon>],
  ["画线", <Icon frame=""><path d="M2 22 L5 15 L17 3 L22 7 L9 19 Z" fill="#f5a623" stroke="#a06820" /><path d="M17 3 L19 1 L23 5 L22 7 Z" fill="#e87878" /><path d="M2 22 L5 15 L9 19 Z" fill="#8c6432" /><path d="M7 16 L18 5" stroke="#ffe08c" strokeWidth="1.500" /></Icon>],
];
const REFRESH_ICONS = [
  ["F5", <Icon frame="#3c8ce6"><text x="12" y="17" fontSize="14" {...small}>F5</text></Icon>],
  ["刷新", <Icon frame="#5090f0"><rect x="2" y="2" width="20" height="20" fill="#e8f5e0" /><path d="M5 12 C5 5 13 4 16 8 L19 6 V12 H12 L14 10 C12 8 9 8 8 12 Z" fill="#50b43c" /><path d="M19 12 C19 19 11 20 8 16 L5 18 V13 H11 L10 15 C12 16 15 16 16 13 Z" fill="#50b43c" /></Icon>],
];
const CYCLES = ["1", "5", "15", "30", "60", "日", "周", "月", "N", "多", "季", "年"];

function IconGroup({ items }) {
  return items.map(([label, icon]) => (
    <button key={label} aria-label={label} className="flex flex-1 items-center justify-center">{icon}</button>
  ));
}

function SideTools() {
  return (
    <nav className="w-[37px] shrink-0 bg-[#f0f0f0] pb-2 text-lg leading-6 text-[#28469b]">
      <div className="flex h-[482px] flex-col"><IconGroup items={NAV_ICONS} /></div>
      <hr className="mx-1 my-1.5 border-[#a0a0a0]" />
      <div className="flex h-[173px] flex-col"><IconGroup items={DRAW_ICONS} /></div>
      <hr className="mx-1 my-1.5 border-[#a0a0a0]" />
      <div className="flex h-[483px] flex-col">
        <IconGroup items={REFRESH_ICONS} />
        {CYCLES.map((c) => (
          <button key={c} className={`flex-1 ${c === "日" ? "border-t-2 border-l-2 border-[#a0a0a0] bg-[#f8f8f8]" : ""}`}>{c}</button>
        ))}
      </div>
    </nav>
  );
}

function StatusBar() {
  return (
    <footer className="flex h-9 items-center border-b-2 border-[#203040] bg-[#f0f0f0] text-[21px] leading-6 font-bold text-black">
      <svg viewBox="0 0 22 22" className="ml-px h-[22px] w-[22px] shrink-0">
        <rect width="22" height="22" rx="2" fill="#f0a020" />
        <rect x="3" y="3" width="16" height="16" fill="#fff0c0" />
        <rect x="6" y="6" width="10" height="9" fill="#f0a828" stroke="#c88010" />
      </svg>
      <div className="ml-0.5 flex gap-6">
        {INDEXES.map(([name, price, change, pct, amount]) => (
          <div key={name} className="flex items-center">
            <span className="w-[48px] text-2xl leading-6 font-light">{name}</span>
            <span className="w-[83px] text-right text-[#f00000]">{price}</span>
            <span className="w-[72px] text-right text-[#f00000]">{change}</span>
            <span className="w-[87px] text-right text-[#f00000]">{pct}</span>
            <span className="w-[98px] text-right"><Amount value={`${amount}亿`} /></span>
          </div>
        ))}
      </div>
      <div className="ml-6 flex h-full items-center gap-3 border-x-2 border-[#b4b4b4] px-[3px]">
        <span className="text-2xl leading-6 font-light">总成交</span>
        <span><Amount value="9293亿" /></span>
      </div>
      <span className="ml-1.5 text-lg font-normal">平安证券上海上证云行情</span>
    </footer>
  );
}

export default function App() {
  return (
    <div className="relative flex min-h-screen flex-col bg-[#f0f0f0] font-['Liberation_Sans','Noto_Sans_CJK_SC',sans-serif]">
      <TitleBar />
      <main className="flex flex-1">
        <Charts />
        <Quote />
        <SideTools />
      </main>
      <StatusBar />
      <div className="absolute right-[5px] bottom-[5px] w-[222px] bg-white py-0.5 text-center font-bold whitespace-nowrap">
        <p className="text-[30px] leading-[30px] text-[#ff3200]">股票公式指标网</p>
        <p className="font-['DejaVu_Sans',sans-serif] text-[21px] leading-[22px] text-[#ff9600]">www.gszx.com.cn</p>
      </div>
    </div>
  );
}
